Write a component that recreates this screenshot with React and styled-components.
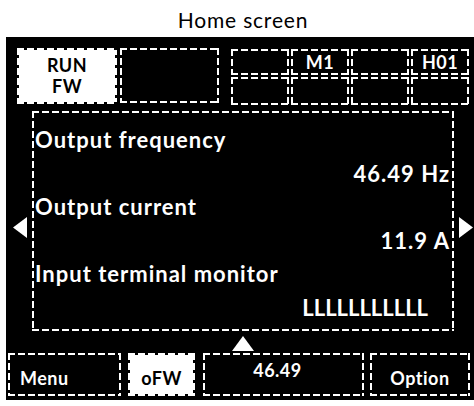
import React from "react";
import styled, { createGlobalStyle, css } from "styled-components";

const Global = createGlobalStyle`
  html, body { margin: 0; padding: 0; background: #fff; }
  body { font-family: Lato, "Open Sans", sans-serif; }
`;

const dash = (gap) => css`
  background:
    repeating-linear-gradient(90deg, #fff 0 7px, ${gap} 7px 10px) top left / 100% 2px no-repeat,
    repeating-linear-gradient(90deg, #fff 0 7px, ${gap} 7px 10px) bottom left / 100% 2px no-repeat,
    repeating-linear-gradient(180deg, #fff 0 7px, ${gap} 7px 10px) top left / 2px 100% no-repeat,
    repeating-linear-gradient(180deg, #fff 0 7px, ${gap} 7px 10px) top right / 2px 100% no-repeat
    ${(p) => (p.$filled ? ", #fff" : "")};
`;

const Page = styled.div`
  width: 474px;
  height: 406px;
  display: flex;
  flex-direction: column;
`;

const Title = styled.div`
  height: 37px;
  display: flex;
  align-items: center;
  justify-content: center;
  padding-left: 12px;
  padding-top: 1px;
  box-sizing: border-box;
  font-size: 21px;
  letter-spacing: 0.8px;
  color: #000;
`;

const Panel = styled.div`
  margin-left: 6px;
  height: 363px;
  background: #000;
  color: #fff;
  font-weight: 700;
  display: flex;
  flex-direction: column;
  box-sizing: border-box;
  padding-top: 11px;
`;

const TopBar = styled.div`
  display: flex;
  align-items: flex-start;
  padding-left: 11px;
  height: 57px;
`;

const Box = styled.div`
  box-sizing: border-box;
  ${(p) => dash(p.$filled ? "#000" : "transparent")}
  color: ${(p) => (p.$filled ? "#000" : "#fff")};
  display: flex;
  align-items: center;
  justify-content: ${(p) => p.$justify || "center"};
  letter-spacing: 0.5px;
`;

const StatusBox = styled(Box)`
  width: ${(p) => p.$w || 100}px;
  height: ${(p) => p.$h || 56}px;
  flex-direction: column;
  font-size: 18px;
  line-height: 21px;
  margin-right: ${(p) => p.$mr || 0}px;
`;

const Grid = styled.div`
  margin-left: 12px;
  margin-top: 1px;
  width: 238px;
  height: 56px;
  display: grid;
  grid-template-columns: repeat(4, 1fr);
  grid-template-rows: 26px 28px;
  column-gap: 2px;
  row-gap: 2px;
`;

const Cell = styled(Box)`
  font-size: 18px;
`;

const Middle = styled.div`
  display: flex;
  align-items: center;
  margin-top: 6px;
`;

const Arrow = styled.svg`
  flex: none;
  margin-top: 12px;
  margin-left: ${(p) => p.$ml || 0}px;
  margin-right: ${(p) => p.$mr || 0}px;
`;

const Monitor = styled(Box)`
  width: 422px;
  height: 220px;
  flex-direction: column;
  align-items: stretch;
  justify-content: flex-start;
  padding: 12px 4px 0 3px;
  font-size: 22px;
  letter-spacing: 1px;
  line-height: 33.5px;
`;

const Line = styled.div`
  text-align: ${(p) => (p.$right ? "right" : "left")};
  padding-right: ${(p) => p.$pr || 0}px;
  letter-spacing: ${(p) => (p.$tight ? "0px" : "inherit")};
  white-space: nowrap;
`;

const UpRow = styled.div`
  display: flex;
  padding-left: 226px;
  margin-top: 5px;
  height: 17px;
`;

const BottomBar = styled.div`
  display: flex;
  padding-left: 2px;
`;

const Key = styled(Box)`
  width: ${(p) => p.$w}px;
  height: 43px;
  margin-right: ${(p) => p.$mr || 0}px;
  font-size: 18px;
  align-items: ${(p) => p.$align || "flex-end"};
  padding: ${(p) => p.$pad || "0 0 7px 0"};
`;

const UpArrow = styled.svg`
  display: block;
`;

const Tri = ({ dir, ml, mr, w, h }) => {
  const pts =
    dir === "left"
      ? `0,${h / 2} ${w},0 ${w},${h}`
      : `0,0 ${w},${h / 2} 0,${h}`;
  return (
    <Arrow width={w} height={h} $ml={ml} $mr={mr} viewBox={`0 0 ${w} ${h}`}>
      <polygon points={pts} fill="#fff" />
    </Arrow>
  );
};

export default function App() {
  return (
    <>
      <Global />
      <Page>
        <Title>Home screen</Title>
        <Panel>
          <TopBar>
            <StatusBox $filled $mr={3}>
              <span>RUN</span>
              <span>FW</span>
            </StatusBox>
            <StatusBox $w={99} $h={55} />
            <Grid>
              <Cell />
              <Cell>M1</Cell>
              <Cell />
              <Cell>H01</Cell>
              <Cell />
              <Cell />
              <Cell />
              <Cell />
            </Grid>
          </TopBar>
          <Middle>
            <Tri dir="left" w={14} h={21} ml={7} mr={5} />
            <Monitor>
              <Line>Output frequency</Line>
              <Line $right>46.49 Hz</Line>
              <Line>Output current</Line>
              <Line $right>11.9 A</Line>
              <Line>Input terminal monitor</Line>
              <Line $right $tight $pr={22}>LLLLLLLLLLL</Line>
            </Monitor>
            <Tri dir="right" w={14} h={21} ml={5} />
          </Middle>
          <UpRow>
            <UpArrow width="22" height="15" viewBox="0 0 22 15">
              <polygon points="0,15 11,0 22,15" fill="#fff" />
            </UpArrow>
          </UpRow>
          <BottomBar>
            <Key $w={113} $mr={7} $justify="flex-start" $pad="0 0 7px 12px">Menu</Key>
            <Key $w={67} $mr={8} $filled>oFW</Key>
            <Key $w={161} $mr={6} $align="center" $pad="0 12px 10px 0">46.49</Key>
            <Key $w={100}>Option</Key>
          </BottomBar>
        </Panel>
      </Page>
    </>
  );
}
